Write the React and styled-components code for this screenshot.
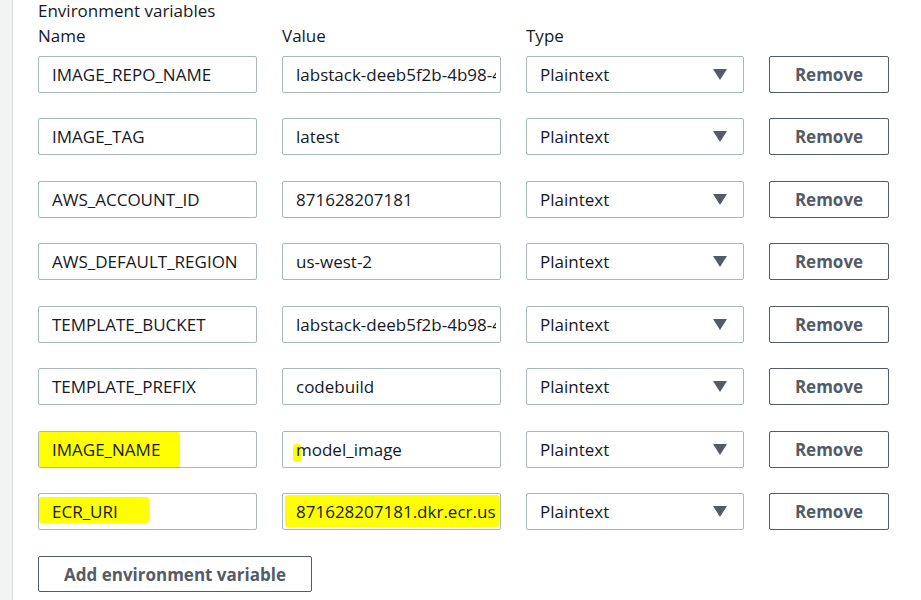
import React from 'react';
import styled, { createGlobalStyle } from 'styled-components';

const GlobalStyle = createGlobalStyle`
  html, body {
    margin: 0;
    padding: 0;
    background: #f2f3f3;
    font-family: "Open Sans", "Noto Sans", sans-serif;
    color: #16191f;
  }
`;

const Page = styled.div`
  margin-left: 12px;
  border-left: 1px solid #d5dbdb;
  background: #ffffff;
  height: 600px;
  overflow: hidden;
  padding: 0 0 0 25px;
  box-sizing: border-box;
`;

const Heading = styled.div`
  font-size: 17px;
  line-height: 22px;
`;

const Grid = styled.div`
  display: grid;
  grid-template-columns: 219px 219px 218px 120px;
  column-gap: 25px;
  row-gap: 25.5px;
  align-items: center;
`;

const ColLabel = styled.div`
  font-size: 17px;
  line-height: 22px;
  margin-top: 3px;
  margin-bottom: -17px;
`;

const Field = styled.div`
  position: relative;
  height: 37px;
  box-sizing: border-box;
  border: 1px solid #aab7b8;
  border-radius: 2px;
  background: #fff;
  display: flex;
  align-items: center;
  padding: 0 4px 0 13px;
  font-size: 17px;
  white-space: nowrap;
  overflow: hidden;
`;

const FieldText = styled.span`
  position: relative;
  z-index: 1;
  overflow: hidden;
  display: block;
  width: 100%;
`;

const Highlight = styled.span`
  position: absolute;
  background: #ffff00;
  border-radius: 3px;
  z-index: 0;
`;

const Select = styled(Field)`
  justify-content: space-between;
  padding-right: 16px;
`;

const Caret = styled.span`
  flex: none;
  width: 0;
  height: 0;
  border-left: 7px solid transparent;
  border-right: 7px solid transparent;
  border-top: 11px solid #545b64;
`;

const Button = styled.button`
  height: 37px;
  box-sizing: border-box;
  border: 1px solid #545b64;
  border-radius: 2px;
  background: #fff;
  color: #545b64;
  font-family: inherit;
  font-weight: 700;
  font-size: 17px;
  padding: 0 10px;
`;

const AddButton = styled(Button)`
  width: 274px;
  height: 36px;
  margin-top: 26px;
`;

const rows = [
  { name: 'IMAGE_REPO_NAME', value: 'labstack-deeb5f2b-4b98-4c1e' },
  { name: 'IMAGE_TAG', value: 'latest' },
  { name: 'AWS_ACCOUNT_ID', value: '871628207181' },
  { name: 'AWS_DEFAULT_REGION', value: 'us-west-2' },
  { name: 'TEMPLATE_BUCKET', value: 'labstack-deeb5f2b-4b98-4c1e' },
  { name: 'TEMPLATE_PREFIX', value: 'codebuild' },
  {
    name: 'IMAGE_NAME',
    value: 'model_image',
    nameMark: { left: -4, top: 0, width: 145, height: 36 },
    valueMark: { left: 10, top: 12, width: 8, height: 18 },
  },
  {
    name: 'ECR_URI',
    value: '871628207181.dkr.ecr.us-west-2.amazonaws.com',
    nameMark: { left: 0, top: 3, width: 110, height: 26 },
    valueMark: { left: 2, top: 1, width: 214, height: 32 },
  },
];

function App() {
  return (
    <>
      <GlobalStyle />
      <Page>
        <Heading>Environment variables</Heading>
        <Grid>
          <ColLabel>Name</ColLabel>
          <ColLabel>Value</ColLabel>
          <ColLabel>Type</ColLabel>
          <div />
          {rows.map((row) => (
            <React.Fragment key={row.name}>
              <Field>
                {row.nameMark && <Highlight style={row.nameMark} />}
                <FieldText>{row.name}</FieldText>
              </Field>
              <Field>
                {row.valueMark && <Highlight style={row.valueMark} />}
                <FieldText>{row.value}</FieldText>
              </Field>
              <Select>
                <span>Plaintext</span>
                <Caret />
              </Select>
              <Button>Remove</Button>
            </React.Fragment>
          ))}
        </Grid>
        <AddButton>Add environment variable</AddButton>
      </Page>
    </>
  );
}

export default App;
